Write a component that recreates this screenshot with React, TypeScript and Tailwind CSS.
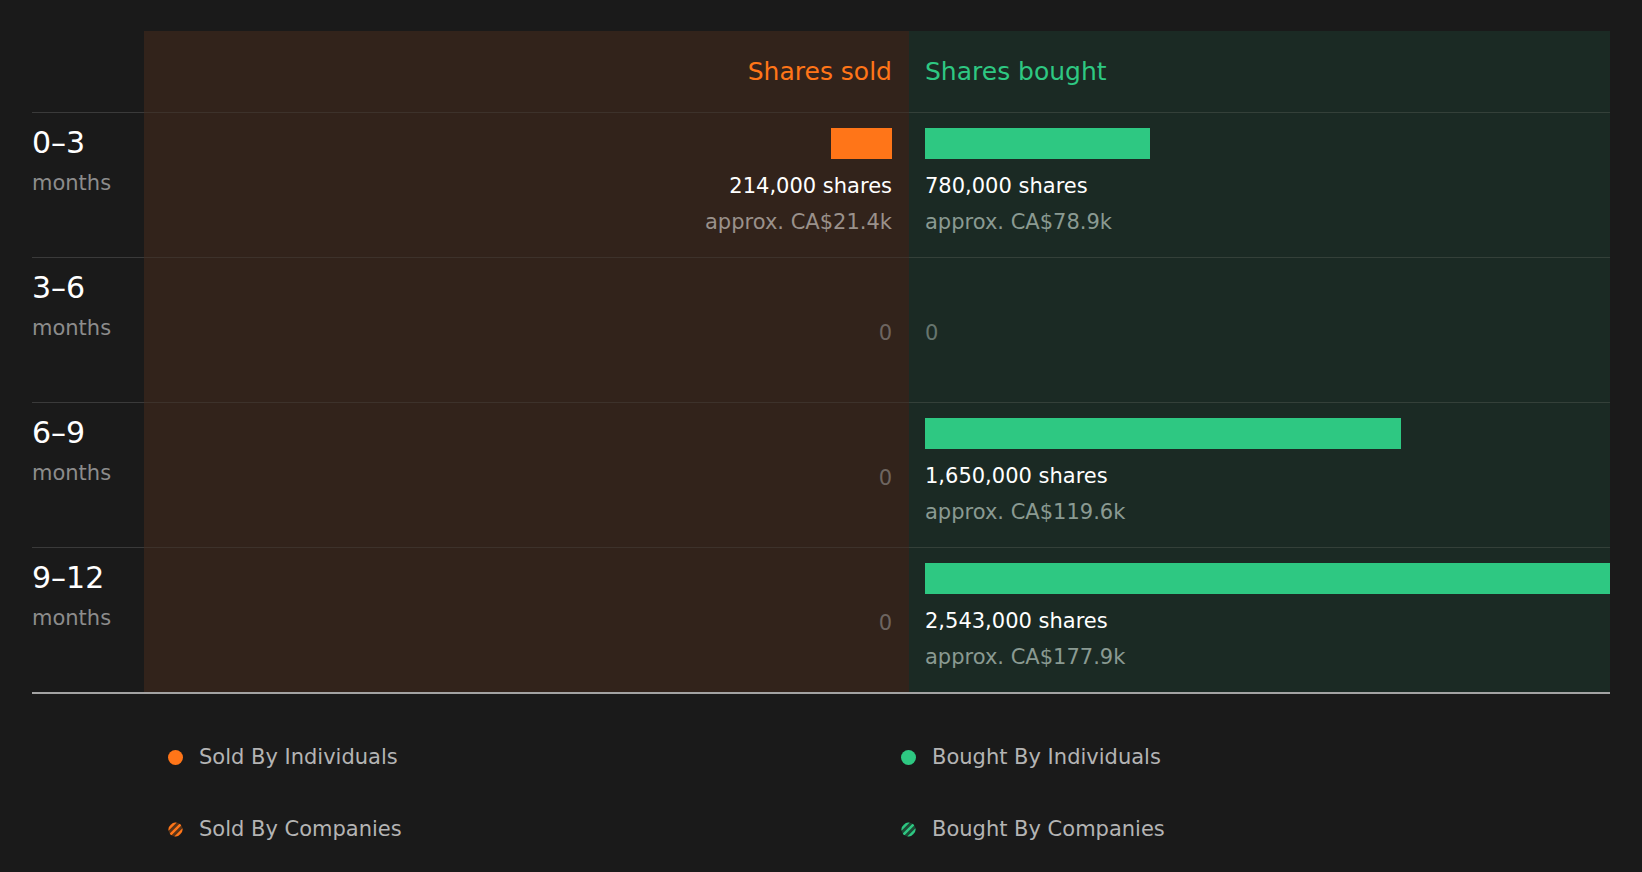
import React from "react";

const rows = [
  { label: "0–3", sold: { w: 61, shares: "214,000 shares", approx: "approx. CA$21.4k" }, bought: { w: 225, shares: "780,000 shares", approx: "approx. CA$78.9k" } },
  { label: "3–6", sold: null, bought: null },
  { label: "6–9", sold: null, bought: { w: 476, shares: "1,650,000 shares", approx: "approx. CA$119.6k" } },
  { label: "9–12", sold: null, bought: { w: 685, shares: "2,543,000 shares", approx: "approx. CA$177.9k" } },
];

function Hatch({ c, bg }: { c: string; bg: string }) {
  return (
    <svg width="15" height="15" viewBox="0 0 16 16">
      <defs>
        <clipPath id={"cl" + c}>
          <circle cx="8" cy="8" r="7.5" />
        </clipPath>
      </defs>
      <g clipPath={`url(#cl${c})`}>
        <rect width="16" height="16" fill={bg} />
        <path d="M-2 10 L10 -2 M2 14 L14 2 M6 18 L18 6" stroke={c} strokeWidth="2.6" />
      </g>
    </svg>
  );
}

export default function App() {
  return (
    <div className="w-[1642px] h-[872px] bg-[#1a1a1a] pt-[31px] px-[32px] text-white" style={{ fontFamily: '"DejaVu Sans", sans-serif' }}>
      <div className="grid grid-cols-[112px_765px_701px]">
        <div className="h-[81px]" />
        <div className="h-[81px] bg-[#32231b] flex items-center justify-end pr-[17px] text-[25px] text-[#ff7518]">Shares sold</div>
        <div className="h-[81px] bg-[#1b2a24] flex items-center pl-[16px] text-[25px] text-[#2ec882]">Shares bought</div>
        {rows.map((r, i) => (
          <React.Fragment key={i}>
            <div className="h-[145px] border-t border-[#3a3a3a] pt-[10px]">
              <div className="text-[30px] leading-[40px]">{r.label}</div>
              <div className="text-[21px] leading-[40px] text-[#8c8c8c]">months</div>
            </div>
            <div className="h-[145px] border-t border-[#3d322b] bg-[#32231b] pr-[17px] flex flex-col items-end">
              {r.sold ? (
                <>
                  <div className="mt-[15px] h-[31px] bg-[#ff7518]" style={{ width: r.sold.w }} />
                  <div className="mt-[12px] text-[21px] leading-[30px]">{r.sold.shares}</div>
                  <div className="mt-[6px] text-[21px] leading-[30px] text-[#9a918b]">{r.sold.approx}</div>
                </>
              ) : (
                <div className="mt-[60px] text-[21px] leading-[30px] text-[#6e6560]">0</div>
              )}
            </div>
            <div className="h-[145px] border-t border-[#344039] bg-[#1b2a24] pl-[16px] flex flex-col items-start">
              {r.bought ? (
                <>
                  <div className="mt-[15px] h-[31px] bg-[#2ec882]" style={{ width: r.bought.w }} />
                  <div className="mt-[12px] text-[21px] leading-[30px]">{r.bought.shares}</div>
                  <div className="mt-[6px] text-[21px] leading-[30px] text-[#8a9a92]">{r.bought.approx}</div>
                </>
              ) : (
                <div className="mt-[60px] text-[21px] leading-[30px] text-[#66756e]">0</div>
              )}
            </div>
          </React.Fragment>
        ))}
      </div>
      <div className="h-[2px] bg-[#a3a3a3]" />
      <div className="grid grid-cols-[733px_1fr] pl-[136px] pt-[52px] gap-y-[50px] text-[21px] text-[#b4b4b4]">
        <div className="flex items-center gap-[16px] leading-[22px]"><span className="w-[15px] h-[15px] rounded-full bg-[#ff7518]" />Sold By Individuals</div>
        <div className="flex items-center gap-[16px] leading-[22px]"><span className="w-[15px] h-[15px] rounded-full bg-[#2ec882]" />Bought By Individuals</div>
        <div className="flex items-center gap-[16px] leading-[22px]"><Hatch c="#ff7518" bg="#5a3418" />Sold By Companies</div>
        <div className="flex items-center gap-[16px] leading-[22px]"><Hatch c="#2ec882" bg="#1d4a36" />Bought By Companies</div>
      </div>
    </div>
  );
}
